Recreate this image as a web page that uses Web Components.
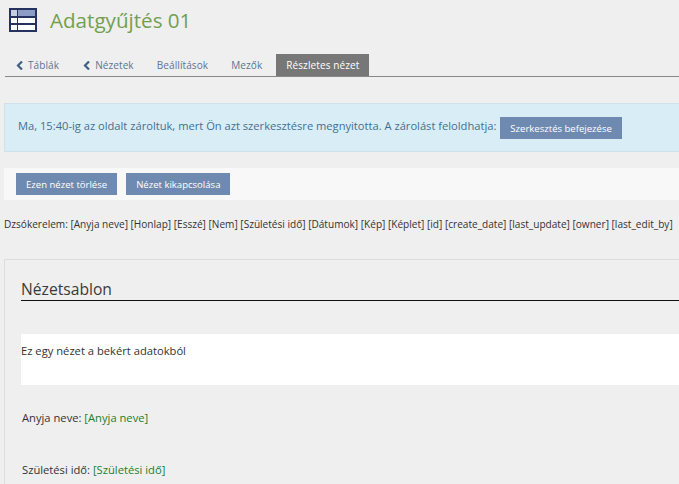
<!DOCTYPE html>
<html lang="hu">
<head>
<meta charset="utf-8">
<title>Adatgyűjtés 01</title>
<style>
  html, body { margin: 0; height: 484px; overflow: hidden; background: #efefef; }
  body { font-family: "Open Sans", sans-serif; font-size: 11px; color: #333; }
</style>
</head>
<body>
<page-header>Adatgyűjtés 01</page-header>
<tab-bar>
  <tab-item back>Táblák</tab-item>
  <tab-item back>Nézetek</tab-item>
  <tab-item>Beállítások</tab-item>
  <tab-item>Mezők</tab-item>
  <tab-item active>Részletes nézet</tab-item>
</tab-bar>
<lock-notice>
  Ma, 15:40-ig az oldalt zároltuk, mert Ön azt szerkesztésre megnyitotta. A zárolást feloldhatja:
  <action-button slot="action">Szerkesztés befejezése</action-button>
</lock-notice>
<action-bar>
  <action-button>Ezen nézet törlése</action-button>
  <action-button>Nézet kikapcsolása</action-button>
</action-bar>
<joker-list>Dzsókerelem: [Anyja neve] [Honlap] [Esszé] [Nem] [Születési idő] [Dátumok] [Kép] [Képlet] [id] [create_date] [last_update] [owner] [last_edit_by]</joker-list>
<template-panel heading="Nézetsablon">
  <intro-box>Ez egy nézet a bekért adatokból</intro-box>
  <field-row label="Anyja neve:">[Anyja neve]</field-row>
  <field-row label="Születési idő:">[Születési idő]</field-row>
</template-panel>

<script>
class PageHeader extends HTMLElement {
  constructor() {
    super();
    this.attachShadow({ mode: 'open' });
    this.shadowRoot.innerHTML = `
      <style>
        :host { display: flex; align-items: flex-start; gap: 13px; padding: 8px 0 0 9px; height: 28px; }
        svg { display: block; flex: none; }
        h1 { margin: -1px 0 0; font: 400 20.6px/26px "Open Sans", sans-serif; color: #72a04f; }
      </style>
      <svg width="28" height="24" viewBox="0 0 28 24">
        <rect x="0" y="0" width="28" height="24" fill="#25315f"/>
        <rect x="2" y="2" width="6" height="6" fill="#c5cee0"/>
        <rect x="9" y="2" width="17" height="6" fill="#8c9cc4"/>
        <rect x="2" y="10" width="6" height="5" fill="#fff"/>
        <rect x="9" y="10" width="17" height="5" fill="#fff"/>
        <rect x="2" y="17" width="6" height="5" fill="#fff"/>
        <rect x="9" y="17" width="17" height="5" fill="#fff"/>
      </svg>
      <h1><slot></slot></h1>
    `;
  }
}

class TabBar extends HTMLElement {
  constructor() {
    super();
    this.attachShadow({ mode: 'open' });
    this.shadowRoot.innerHTML = `
      <style>
        :host { display: flex; margin: 18px 0 0 5px; height: 22px; border-bottom: 1px solid #888; }
      </style>
      <slot></slot>
    `;
  }
}

class TabItem extends HTMLElement {
  constructor() {
    super();
    this.attachShadow({ mode: 'open' });
    const back = this.hasAttribute('back');
    this.shadowRoot.innerHTML = `
      <style>
        :host { display: flex; align-items: center; gap: 4px; height: 22px; padding: 0 9px 0 10px; margin-right: 4px;
          font: 400 10px/22px "Open Sans", sans-serif; letter-spacing: .1px; color: #5b7493; }
        :host([active]) { background: #777; color: #fff; margin: 0 0 0 1px; padding-right: 9.5px; }
        svg { display: block; }
      </style>
      ${back ? '<svg width="9" height="9" viewBox="0 0 9 9"><path d="M7 .5 3 4.5l4 4" fill="none" stroke="#3f5f85" stroke-width="2.2"/></svg>' : ''}
      <slot></slot>
    `;
  }
}

class LockNotice extends HTMLElement {
  constructor() {
    super();
    this.attachShadow({ mode: 'open' });
    this.shadowRoot.innerHTML = `
      <style>
        :host { display: flex; align-items: center; gap: 4px; box-sizing: border-box; height: 49px; margin: 26px 0 0 4px; padding-left: 13px;
          background: #d9edf7; border: 1px solid #cfe2ec; border-right: 0; white-space: nowrap;
          font: 400 11.15px/16px "Open Sans", sans-serif; color: #44708f; }
        span { position: relative; top: -2px; }
      </style>
      <span><slot></slot></span>
      <slot name="action"></slot>
    `;
  }
}

class ActionButton extends HTMLElement {
  constructor() {
    super();
    this.attachShadow({ mode: 'open' });
    this.shadowRoot.innerHTML = `
      <style>
        :host { display: inline-block; padding: 0 10px; height: 22px; background: #6f8ab0; color: #fff;
          font: 400 9.55px/23px "Open Sans", sans-serif; white-space: nowrap; }
      </style>
      <slot></slot>
    `;
  }
}

class ActionBar extends HTMLElement {
  constructor() {
    super();
    this.attachShadow({ mode: 'open' });
    this.shadowRoot.innerHTML = `
      <style>
        :host { display: flex; align-items: center; gap: 9px; box-sizing: border-box; height: 32px; margin: 16px 0 0 4px; padding-left: 12px; background: #f8f8f8; }
      </style>
      <slot></slot>
    `;
  }
}

class JokerList extends HTMLElement {
  constructor() {
    super();
    this.attachShadow({ mode: 'open' });
    this.shadowRoot.innerHTML = `
      <style>
        :host { display: block; margin: 17px 0 0 4px; font: 400 10.08px/15px "Open Sans", sans-serif; color: #333; white-space: nowrap; }
      </style>
      <slot></slot>
    `;
  }
}

class TemplatePanel extends HTMLElement {
  constructor() {
    super();
    this.attachShadow({ mode: 'open' });
    this.shadowRoot.innerHTML = `
      <style>
        :host { display: block; box-sizing: border-box; margin: 27px 0 0 4px; padding: 17px 0 0 16px; height: 240px;
          border: 1px solid #ddd; border-right: 0; }
        h2 { margin: 0 0 33px; height: 23px; font: 400 15.65px/25px "Open Sans", sans-serif; color: #3a3a3a; border-bottom: 1px solid #111; }
      </style>
      <h2>${this.getAttribute('heading')}</h2>
      <slot></slot>
    `;
  }
}

class IntroBox extends HTMLElement {
  constructor() {
    super();
    this.attachShadow({ mode: 'open' });
    this.shadowRoot.innerHTML = `
      <style>
        :host { display: block; box-sizing: border-box; height: 51px; padding-top: 9px; background: #fff;
          font: 400 11.2px/16px "Open Sans", sans-serif; color: #333; }
      </style>
      <slot></slot>
    `;
  }
}

class FieldRow extends HTMLElement {
  constructor() {
    super();
    this.attachShadow({ mode: 'open' });
    this.shadowRoot.innerHTML = `
      <style>
        :host { display: block; margin: 25px 0 0 1px; height: 27px; font: 400 11.2px/16px "Open Sans", sans-serif; color: #333; }
        span { color: #1b7f2b; }
      </style>
      ${this.getAttribute('label')} <span><slot></slot></span>
    `;
  }
}

customElements.define('page-header', PageHeader);
customElements.define('tab-bar', TabBar);
customElements.define('tab-item', TabItem);
customElements.define('lock-notice', LockNotice);
customElements.define('action-button', ActionButton);
customElements.define('action-bar', ActionBar);
customElements.define('joker-list', JokerList);
customElements.define('template-panel', TemplatePanel);
customElements.define('intro-box', IntroBox);
customElements.define('field-row', FieldRow);
</script>
</body>
</html>
